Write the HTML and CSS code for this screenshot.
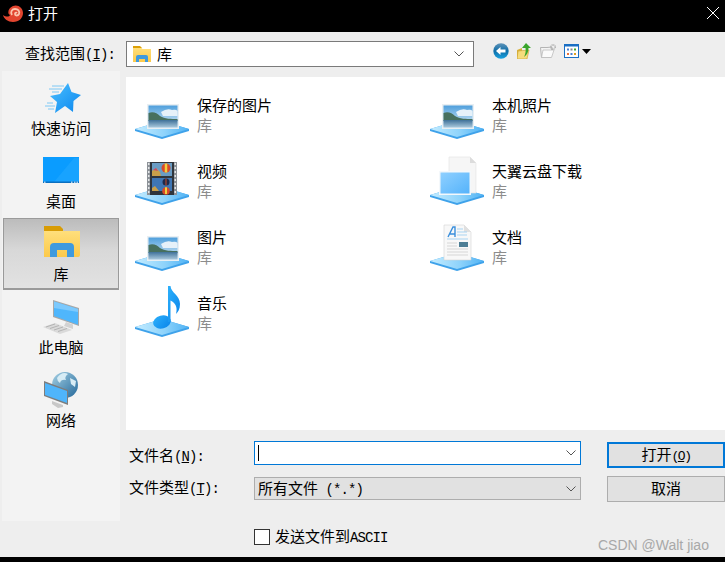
FILE: index.html
```html
<!DOCTYPE html>
<html lang="zh-CN">
<head>
<meta charset="utf-8">
<title>打开</title>
<link rel="stylesheet" href="styles.css">
</head>
<body>
<svg class="sprite" aria-hidden="true">
  <defs>
    <linearGradient id="gPlat" x1="0" y1="0" x2="1" y2="0"><stop offset="0" stop-color="#c4ecff"/><stop offset="0.55" stop-color="#8ed3fb"/><stop offset="1" stop-color="#4fb2f4"/></linearGradient>
    <linearGradient id="gSky" x1="0" y1="0" x2="0" y2="1"><stop offset="0" stop-color="#4f9fdc"/><stop offset="0.7" stop-color="#b5d8f0"/><stop offset="1" stop-color="#d3e8f6"/></linearGradient>
    <linearGradient id="gWater" x1="0" y1="0" x2="0" y2="1"><stop offset="0" stop-color="#3f7199"/><stop offset="1" stop-color="#a9c8dc"/></linearGradient>
    <linearGradient id="gCard" x1="0" y1="0" x2="1" y2="1"><stop offset="0" stop-color="#8fd0ff"/><stop offset="1" stop-color="#55b3fb"/></linearGradient>
    <linearGradient id="gStar" x1="0" y1="0" x2="1" y2="1"><stop offset="0" stop-color="#4cc0ff"/><stop offset="1" stop-color="#0a86ee"/></linearGradient>
    <linearGradient id="gNote" x1="0" y1="0" x2="1" y2="1"><stop offset="0" stop-color="#2cb0fb"/><stop offset="1" stop-color="#0a84ea"/></linearGradient>
    <linearGradient id="gFolder" x1="0" y1="0" x2="0" y2="1"><stop offset="0" stop-color="#ffdf7c"/><stop offset="1" stop-color="#fcc94a"/></linearGradient>
    <linearGradient id="gBack" x1="0" y1="0" x2="0" y2="1"><stop offset="0" stop-color="#5f93b8"/><stop offset="0.5" stop-color="#0f6ea8"/><stop offset="1" stop-color="#19a2e0"/></linearGradient>
    <linearGradient id="gGlobe" x1="0" y1="0" x2="1" y2="1"><stop offset="0" stop-color="#a4d0e4"/><stop offset="1" stop-color="#24689a"/></linearGradient>
    <symbol id="platform" viewBox="0 0 54 54">
      <path d="M0 41 27 33 54 41 54 43 27 51 0 43Z" fill="#3fa2ea"/>
      <path d="M0 41 27 33 54 41 27 49Z" fill="url(#gPlat)"/>
    </symbol>
    <symbol id="photo" viewBox="0 0 54 54">
      <use href="#platform" width="54" height="54"/>
      <rect x="12" y="16" width="32" height="25" fill="#e9eff3"/>
      <rect x="13.500" y="17.500" width="29" height="22" fill="url(#gSky)"/>
      <path d="M26 24Q32 20 37 22 41 21 42.500 23V28H28Z" fill="#e6f1f9"/>
      <path d="M13.500 25C18 23 22 25 25 28 30 31 36 31 42.500 31V33H13.500Z" fill="#47705e"/>
      <rect x="13.500" y="32" width="29" height="7.500" fill="url(#gWater)"/>
    </symbol>
  </defs>
</svg>

<div class="dialog">
  <header class="titlebar">
    <svg class="logo" viewBox="0 0 20 17" width="20" height="17"><path d="M0 10C3 12 6 12 7 10 4 9 5 3 10 1 15-1 20 3 20 8 20 13 16 17 10 17 5 17 1 14 0 10Z" fill="#e2452f"/><path d="M9 10C7 7 9 4 12 4 15 4 17 6 16 9 15 11 12 11 12 9 12 8 13 7 14 8" fill="none" stroke="#fbc4ad" stroke-width="1.800"/></svg>
    <span class="title">打开</span>
    <svg class="close" viewBox="0 0 12 12" width="12" height="12"><path d="M0 0 12 12M12 0 0 12" stroke="#fff" stroke-width="1"/></svg>
  </header>

  <div class="body">
    <div class="toolbar">
      <label class="look-label">查找范围<span class="latin">(<u>I</u>):</span></label>
      <div class="combo">
        <svg class="combo-icon" viewBox="0 0 18 16" width="18" height="16"><path d="M0 1.500H8L9.500 3H18V16H0Z" fill="url(#gFolder)"/><path d="M0 0H7L9 2H0Z" fill="#dc9f06"/><path d="M3 16V11Q3 9 5 9H13Q15 9 15 11V16H12V13H6V16Z" fill="#3f9ade"/></svg>
        <span>库</span>
        <svg class="chev" viewBox="0 0 10 6" width="10" height="6"><path d="M.5.500 5 5 9.500.500" fill="none" stroke="#555"/></svg>
      </div>
      <div class="tools">
        <svg viewBox="0 0 16 16" width="16" height="16"><circle cx="8" cy="8" r="7.700" fill="url(#gBack)"/><path d="M3 8 7.500 4V6.500H12.500V9.500H7.500V12Z" fill="#fff"/></svg>
        <svg viewBox="0 0 15 16" width="15" height="16"><path d="M0 7 5 5V16H0Z" fill="#d9b23c"/><path d="M1 8 12 7 10 16H0Z" fill="#f6dc7c" stroke="#c99e2c" stroke-width=".6"/><path d="M9 0 14 5H11.500C11.500 9 10 12 7 14 8.500 11 9 8 8.500 5H5Z" fill="#3aa52c"/></svg>
        <svg viewBox="0 0 16 14" width="16" height="14"><path d="M.5 3.500H7L12 3 10.500 13.500H1.500Z" fill="#f3f3f3" stroke="#b4b4b4"/><path d="M3 6H14L11.500 13.500H1.500Z" fill="#fafafa" stroke="#bdbdbd" stroke-width=".8"/><circle cx="13" cy="3" r="2.200" fill="none" stroke="#a0a0a0" stroke-width="1.200" stroke-dasharray="1 .6"/></svg>
        <div class="view-tool">
          <svg viewBox="0 0 15 14" width="15" height="14"><rect x=".5" y=".5" width="14" height="13" fill="#fff" stroke="#1a6fc4"/><rect x="0" y="0" width="15" height="2.500" fill="#1a6fc4"/><rect x="3" y="4.500" width="2" height="2" fill="#4a7fd0"/><rect x="6.500" y="4.500" width="2" height="2" fill="#888"/><rect x="10" y="4.500" width="2" height="2" fill="#3aa52c"/><rect x="3" y="9" width="2" height="2" fill="#e8703a"/><rect x="6.500" y="9" width="2" height="2" fill="#4a7fd0"/><rect x="10" y="9" width="2" height="2" fill="#e0a020"/></svg>
          <svg viewBox="0 0 9 5" width="9" height="5"><path d="M0 0H9L4.500 5Z" fill="#000"/></svg>
        </div>
      </div>
    </div>

    <nav class="places">
      <div class="place">
        <svg viewBox="0 0 42 42" width="42" height="42"><path d="M12 10H24M9 13H22M12 16H19M7 27H13M5 30H15M8 33H14" stroke="#7cc8f5" stroke-width="1"/><path d="M28 7 31.500 16 41 19 33.500 25 33 36 25 30 15 37 17 26 10 20 20 18Z" fill="url(#gStar)"/></svg>
        <span>快速访问</span>
      </div>
      <div class="place">
        <svg viewBox="0 0 42 42" width="42" height="42"><rect x="3" y="8" width="36" height="26" fill="#0a9cff"/><path d="M14 33 34 9H39V33Z" fill="#18a3ff"/><rect x="3" y="32.500" width="36" height="1.500" fill="#0a6fc0"/><path d="M4 33.200H5.500M31 33.200H32.500M34 33.200H35.500M36.500 33.200H38" stroke="#fff"/></svg>
        <span>桌面</span>
      </div>
      <div class="place is-active">
        <svg viewBox="0 0 42 42" width="42" height="42"><path d="M4 9H40V33Q40 35 38 35H4Z" fill="url(#gFolder)"/><path d="M4 4H20L23 7V9H4Z" fill="#d89c05"/><path d="M10 35V25Q10 21 14 21H30Q34 21 34 25V35H27V28H17V35Z" fill="#3f9ade"/></svg>
        <span>库</span>
      </div>
      <div class="place">
        <svg viewBox="0 0 42 42" width="42" height="42"><path d="M13 5 39 13V31L13 22Z" fill="#a8a8a8"/><path d="M14 6.500 38 14V29.700L14 21Z" fill="#4fb6fc"/><path d="M14 6.500 38 14V17L14 13Z" fill="#7cc9fd"/><path d="M26 27 33 29.500V34L24 31Z" fill="#d2d2d2"/><path d="M3 32 15 28 32 35 20 39Z" fill="#dadada"/><path d="M6 32 15 29M10 33.500 19 30.500M14 35 23 32M18 36.500 27 33.500" stroke="#a9a9a9" stroke-width=".8"/></svg>
        <span>此电脑</span>
      </div>
      <div class="place">
        <svg viewBox="0 0 42 42" width="42" height="42"><circle cx="25" cy="17" r="13" fill="url(#gGlobe)"/><path d="M17 10Q22 3 28 6 24 9 26 12 21 11 20 15 17 13 17 10ZM30 10 36 13 35 19 31 16Z" fill="#d7ecf5"/><path d="M4 13 28 22V37L4 28Z" fill="#7d7d7d"/><path d="M5 15 27 23V35L5 27Z" fill="#4fb5fb"/><path d="M12 33 23 37V39L18 40 12 36Z" fill="#c8c8c8"/></svg>
        <span>网络</span>
      </div>
    </nav>

    <main class="library">
      <div class="entry">
        <svg class="entry-icon" width="54" height="54"><use href="#photo"/></svg>
        <div class="entry-text"><span class="name">保存的图片</span><span class="kind">库</span></div>
      </div>
      <div class="entry">
        <svg class="entry-icon" width="54" height="54"><use href="#photo"/></svg>
        <div class="entry-text"><span class="name">本机照片</span><span class="kind">库</span></div>
      </div>
      <div class="entry">
        <svg class="entry-icon" viewBox="0 0 54 54" width="54" height="54">
          <use href="#platform" width="54" height="54"/>
          <rect x="12" y="8" width="30" height="33" fill="#8d9298"/>
          <rect x="15" y="8" width="24" height="33" fill="#30353c"/>
          <path d="M13 10H14.500M13 14H14.500M13 18H14.500M13 22H14.500M13 26H14.500M13 30H14.500M13 34H14.500M13 38H14.500M39.500 10H41M39.500 14H41M39.500 18H41M39.500 22H41M39.500 26H41M39.500 30H41M39.500 34H41M39.500 38H41" stroke="#e4e6e8" stroke-width="2"/>
          <rect x="17" y="9" width="20" height="13" fill="#6a9cc4"/>
          <rect x="17" y="24" width="20" height="13" fill="#3f76b4"/>
          <path d="M17 22V17L21 14 25 18 26 22ZM17 37V34L20 32 24 37Z" fill="#c9a04a"/>
          <path d="M18 16 21 14 23 17Z" fill="#c84a6a"/>
          <circle cx="31" cy="14" r="4.500" fill="#d84a2a"/>
          <path d="M31 9.500V18.500" stroke="#f0d040" stroke-width="2.500"/>
          <circle cx="31" cy="28" r="3.500" fill="#1f2a4a"/>
          <path d="M31 24.500V31.500" stroke="#c84a2a"/>
          <circle cx="31" cy="37" r="3.800" fill="#d84a2a"/>
          <path d="M31 33.200V40" stroke="#f0d040" stroke-width="2"/>
        </svg>
        <div class="entry-text"><span class="name">视频</span><span class="kind">库</span></div>
      </div>
      <div class="entry">
        <svg class="entry-icon" viewBox="0 0 54 54" width="54" height="54">
          <use href="#platform" width="54" height="54"/>
          <path d="M19 3H40L46 9V39H19Z" fill="#f6f6f6" stroke="#e2e2e2" stroke-width=".6"/>
          <path d="M40 3 46 9H40Z" fill="#dcdcdc"/>
          <rect x="9" y="17" width="32" height="24" fill="#f4f8fb"/>
          <rect x="10.500" y="18.500" width="29" height="21" fill="url(#gCard)"/>
        </svg>
        <div class="entry-text"><span class="name">天翼云盘下载</span><span class="kind">库</span></div>
      </div>
      <div class="entry">
        <svg class="entry-icon" width="54" height="54"><use href="#photo"/></svg>
        <div class="entry-text"><span class="name">图片</span><span class="kind">库</span></div>
      </div>
      <div class="entry">
        <svg class="entry-icon" viewBox="0 0 54 54" width="54" height="54">
          <use href="#platform" width="54" height="54"/>
          <path d="M14 5H34L41 12V40H14Z" fill="#f8f8f8" stroke="#d4d4d4" stroke-width=".6"/>
          <path d="M34 5 41 12H34Z" fill="#e0e0e0"/>
          <path d="M18 17 23 7H25V17M20 14H25" fill="none" stroke="#3a8fdc" stroke-width="1.400"/>
          <path d="M27 9H33M27 12H37M27 15H37M17 19H38" stroke="#a9d4f2"/>
          <path d="M17 23H27M17 26H27M17 29H38M17 32H38M17 35H38" stroke="#d6d6d6"/>
          <rect x="29" y="22" width="9" height="5" fill="#4d7e95"/>
        </svg>
        <div class="entry-text"><span class="name">文档</span><span class="kind">库</span></div>
      </div>
      <div class="entry">
        <svg class="entry-icon" viewBox="0 0 54 54" width="54" height="54">
          <use href="#platform" width="54" height="54"/>
          <ellipse cx="27" cy="36" rx="9" ry="6.500" fill="url(#gNote)" transform="rotate(-15 27 36)"/>
          <path d="M33 0H35.500C36 7 45 9 45 18 45 23 43 26 41 28 42 24 42 20 39 17 38 16 36.500 15 35.500 14.500V36H33Z" fill="url(#gNote)"/>
        </svg>
        <div class="entry-text"><span class="name">音乐</span><span class="kind">库</span></div>
      </div>
    </main>

    <form class="file-form">
      <label class="form-label first">文件名<span class="latin">(<u>N</u>):</span></label>
      <div class="field name-field">
        <span class="caret"></span>
        <svg class="chev" viewBox="0 0 10 6" width="10" height="6"><path d="M.5.500 5 5 9.500.500" fill="none" stroke="#555"/></svg>
      </div>
      <button class="btn btn-default" type="button">打开<span class="latin small">(<u>O</u>)</span></button>

      <label class="form-label">文件类型<span class="latin">(<u>T</u>):</span></label>
      <div class="field type-field">
        <span>所有文件<span class="latin"> (*.*)</span></span>
        <svg class="chev" viewBox="0 0 10 6" width="10" height="6"><path d="M.5.500 5 5 9.500.500" fill="none" stroke="#555"/></svg>
      </div>
      <button class="btn" type="button">取消</button>

      <div class="send-row">
        <span class="checkbox"></span>
        <span>发送文件到<span class="latin">ASCII</span></span>
      </div>
    </form>
  </div>
  <div class="bottom-bar"></div>
  <div class="watermark">CSDN @Walt jiao</div>
</div>
</body>
</html>
```

FILE: styles.css
```css
* { box-sizing: border-box; }
html, body { margin: 0; padding: 0; }
body { width: 725px; height: 562px; overflow: hidden; background: #000; }
.sprite { position: absolute; width: 0; height: 0; }

.dialog {
  position: relative;
  width: 725px;
  height: 562px;
  display: flex;
  flex-direction: column;
  font-family: "Noto Sans CJK SC", "Liberation Sans", sans-serif;
  font-size: 15px;
  line-height: 20px;
  color: #000;
}
svg { display: block; flex: none; }
.latin {
  font-family: "Liberation Mono", monospace;
  font-size: 14px;
  letter-spacing: -0.9px;
}
.latin.small { font-size: 13px; letter-spacing: -1.4px; }

.titlebar {
  height: 32px;
  flex: none;
  background: #000;
  color: #fff;
  display: flex;
  align-items: center;
  padding: 0 6px 0 3px;
}
.logo { margin-top: -5px; }
.title { margin-left: 5px; margin-top: -6px; }
.close { margin-left: auto; margin-top: -6px; }

.body {
  flex: 1;
  display: grid;
  grid-template-columns: 126px 1fr;
  grid-template-rows: 39px 6px 353px 91px 36px;
  background: #eee;
}

.toolbar {
  grid-column: 1 / 3;
  grid-row: 1;
  display: flex;
  align-items: flex-start;
  padding: 9px 0 0 25px;
}
.look-label { width: 101px; line-height: 24px; }
.combo {
  width: 348px;
  height: 26px;
  background: #fff;
  border: 1px solid #7a7a7a;
  display: flex;
  align-items: center;
  padding: 0 9px 0 6px;
  gap: 6px;
}
.chev { margin-left: auto; }
.tools {
  display: flex;
  align-items: center;
  gap: 8px;
  margin: 2px 0 0 19px;
}
.view-tool { display: flex; align-items: center; gap: 3px; }

.places {
  grid-column: 1;
  grid-row: 2 / 5;
  margin: 0 6px 0 2px;
  background: #f3f3f3;
  padding: 1px 1px 0;
  display: flex;
  flex-direction: column;
  gap: 1px;
}
.place {
  height: 72px;
  padding-top: 4px;
  display: flex;
  flex-direction: column;
  align-items: center;
  border: 1px solid transparent;
}
.place svg { margin-top: -1px; }
.place span { line-height: 20px; }
.place.is-active {
  background: linear-gradient(#bcbcbc, #d8d8d8 45%, #e2e2e2);
  border: 1px solid #9a9a9a;
  border-bottom-width: 2px;
}

.library {
  grid-column: 2;
  grid-row: 3;
  background: #fff;
  padding: 5px 0 0 9px;
  display: grid;
  grid-template-columns: 295px 295px;
  grid-auto-rows: 66px;
}
.entry { display: flex; align-items: center; gap: 8px; height: 66px; }
.entry-text { display: flex; flex-direction: column; margin-top: -1px; }
.kind { color: #8c8c8c; }

.file-form {
  grid-column: 2;
  grid-row: 4 / 6;
  padding: 11px 0 0 3px;
  display: grid;
  grid-template-columns: 125px 327px 118px;
  grid-template-rows: 27px 26px 16px;
  row-gap: 8px;
  align-items: start;
}
.form-label { line-height: 22px; }
.form-label.first { margin-top: 3px; }
.field {
  width: 327px;
  display: flex;
  align-items: center;
  padding: 0 4px 0 3px;
}
.name-field { height: 24px; background: #fff; border: 1px solid #0078d7; }
.caret { width: 1px; height: 16px; background: #000; }
.type-field { height: 23px; margin-top: 1px; background: #e1e1e1; border: 1px solid #adadad; }
.btn {
  grid-column: 3;
  margin-left: 26px;
  width: 118px;
  height: 26px;
  padding: 0 0 2px;
  background: #e1e1e1;
  border: 1px solid #adadad;
  font: inherit;
  line-height: 20px;
  color: #000;
}
.btn-default { margin-top: 1px; border: 2px solid #0078d7; }
.send-row {
  grid-column: 2;
  margin-top: 19px;
  display: flex;
  align-items: center;
  gap: 5px;
  height: 16px;
}
.checkbox { width: 16px; height: 16px; background: #fff; border: 1px solid #333; }

.bottom-bar { height: 5px; flex: none; background: #000; }
.watermark {
  position: absolute;
  left: 598px;
  top: 537px;
  font-family: "Liberation Sans", sans-serif;
  font-size: 14px;
  line-height: 16px;
  color: #a8a8a8;
  white-space: nowrap;
}
```
